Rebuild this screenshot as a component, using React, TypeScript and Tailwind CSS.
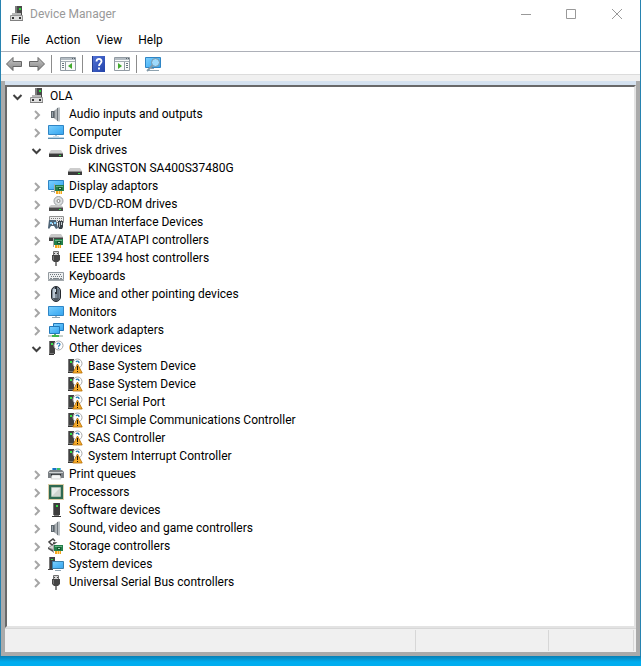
import { useState } from "react";
import type { ReactNode } from "react";

const Svg = ({ children }: { children: ReactNode }) => (
  <svg viewBox="0 0 16 16" className="size-4 shrink-0" aria-hidden="true">
    {children}
  </svg>
);

const Gradients = () => (
  <svg className="absolute size-0" aria-hidden="true">
    <defs>
      <linearGradient id="screen" x1="0" y1="0" x2="1" y2="1">
        <stop offset="0" stopColor="#7fd0fd" />
        <stop offset="0.5" stopColor="#55baf8" />
        <stop offset="1" stopColor="#35a4ee" />
      </linearGradient>
      <linearGradient id="metal" x1="0" y1="0" x2="1" y2="0">
        <stop offset="0" stopColor="#5d656b" />
        <stop offset="0.5" stopColor="#c3c8cb" />
        <stop offset="1" stopColor="#737a7f" />
      </linearGradient>
      <linearGradient id="arrow" x1="0" y1="0" x2="0" y2="1">
        <stop offset="0" stopColor="#c8c8c8" />
        <stop offset="1" stopColor="#858585" />
      </linearGradient>
      <linearGradient id="helpBlue" x1="0" y1="0" x2="1" y2="1">
        <stop offset="0" stopColor="#5273d8" />
        <stop offset="1" stopColor="#2242a8" />
      </linearGradient>
    </defs>
  </svg>
);

const DeviceIcon = () => (
  <Svg>
    <path d="M6 0h7v9H6z" fill="#4a4a4a" />
    <path d="M6 0h2v9H6z" fill="#7d7d7d" />
    <path d="M10 2h2v2h-2z" fill="#2be03a" />
    <path d="M3 7h9v3H3z" fill="#b8b8b8" />
    <path d="M1.500 9.500h12v5h-12z" fill="#dedede" stroke="#949494" />
    <path d="M3 11h2v2H3zM10 11h2v2h-2z" fill="#333" />
    <path d="M1 14h13v1H1z" fill="#808080" />
  </Svg>
);

const SpeakerIcon = () => (
  <Svg>
    <path d="M3 5h3v7H3z" fill="#5d666d" />
    <path d="M4 6h1v5H4z" fill="#9ba5ac" />
    <path d="M6 5l4-3.500v14L6 12z" fill="url(#metal)" />
    <path d="M10 1.500h2v14h-2z" fill="#b9bfc3" />
    <path d="M9.500 2v13" stroke="#6d757b" />
  </Svg>
);

const ComputerIcon = () => (
  <Svg>
    <path d="M.5 1.500h15v9H.5z" fill="url(#screen)" stroke="#2f85c5" />
    <path d="M7 11h2v2H7z" fill="#b5c7d2" />
    <path d="M0 13h16v1H0z" fill="#b8d5e8" />
    <path d="M0 14h16v1H0z" fill="#5f8fb0" />
    <path d="M5 12h6v1H5z" fill="#d5e2ea" />
  </Svg>
);

const MonitorIcon = () => (
  <Svg>
    <path d="M.5 2.500h15v9H.5z" fill="url(#screen)" stroke="#2f85c5" />
    <path d="M7 12h2v1H7z" fill="#a8b8c2" />
    <path d="M4 13h8v1H4z" fill="#8ea2af" />
  </Svg>
);

const DriveIcon = () => (
  <Svg>
    <path d="M3 8h10l2 3H1z" fill="#cdcdcd" />
    <path d="M1 11h14v4H1z" fill="#3b3b3b" />
    <path d="M1 11h14v1H1z" fill="#8c8c8c" />
    <path d="M11 13h2v1h-2z" fill="#35e649" />
  </Svg>
);

const Card = ({ x, y }: { x: number; y: number }) => (
  <g transform={`translate(${x} ${y})`}>
    <path d="M0 0h1v9H0z" fill="#a8a8a8" />
    <path d="M1 1h9v6H1z" fill="#23804b" />
    <path d="M2 2h7v1H2z" fill="#69b184" />
    <path d="M4 3h4v3H4z" fill="#125b31" />
    <path d="M5 4h2v1H5z" fill="#a6d4b4" />
    <path d="M2 7h6v3H2z" fill="#f3a51e" />
    <path d="M4 7h1v3H4zM6 7h1v3H6z" fill="#ffd982" />
  </g>
);

const DisplayIcon = () => (
  <Svg>
    <path d="M.5 2.500h15v9H.5z" fill="url(#screen)" stroke="#2f85c5" />
    <path d="M3 13h4v1H3z" fill="#8ea2af" />
    <Card x={6} y={6} />
  </Svg>
);

const DiscIcon = () => (
  <Svg>
    <circle cx="10.500" cy="5" r="4.500" fill="#dcdfe0" stroke="#9b9fa2" />
    <circle cx="10.500" cy="5" r="1.500" fill="#fff" stroke="#888" />
    <path d="M3 9h10l2 2H1z" fill="#c8c8c8" />
    <path d="M1 11h14v4H1z" fill="#4a4a4a" />
    <path d="M1 11h14v1H1z" fill="#929292" />
    <path d="M11 13h2v1h-2z" fill="#35e649" />
  </Svg>
);

const HidIcon = () => (
  <Svg>
    <path d="M1.500 2.500h14v6h-14z" fill="#eee" stroke="#929292" />
    <path d="M3 4.500h12M3 6.500h12" stroke="#777" strokeDasharray="1 1" />
    <path d="M1 6h7l2 8-2 1-2-3H3l-2 3-1-1z" fill="#4f6476" />
    <path d="M2 8h2v2H2zM6 8h2v2H6z" fill="#8bd0f7" />
    <path d="M4 9h1v2H4z" fill="#dce7ee" />
    <path d="M10 7h5v6l-1 2h-3l-1-2z" fill="#394047" />
    <path d="M11 8h1v5h-1z" fill="#a1a9b0" />
    <path d="M13 8h1v3h-1z" fill="#c5cbd0" />
  </Svg>
);

const IdeIcon = () => (
  <Svg>
    <path d="M3 2h10l2 3H1z" fill="#c9c9c9" />
    <path d="M1 5h14v4H1z" fill="#434343" />
    <path d="M1 5h14v1H1z" fill="#888" />
    <Card x={5} y={6} />
  </Svg>
);

const PlugIcon = () => (
  <Svg>
    <path d="M5.500 1.500h5v4h-5z" fill="#d6d6d6" stroke="#707070" />
    <path d="M6 3h1v1H6zM9 3h1v1H9z" fill="#444" />
    <path d="M4 5h8v5l-2 2H6l-2-2z" fill="#454545" />
    <path d="M5 6h1v4H5z" fill="#777" />
    <path d="M7 12h2v4H7z" fill="#858585" />
  </Svg>
);

const KeyboardIcon = () => (
  <Svg>
    <path d="M.5 4.500h15v7H.5z" fill="#eef0f1" stroke="#92999e" />
    <path d="M2 6.500h12" stroke="#6d757b" strokeDasharray="1 1" />
    <path d="M3 8.500h11" stroke="#6d757b" strokeDasharray="1 1" />
    <path d="M2 10.500h2M12 10.500h2M5 10.500h6" stroke="#7f878d" />
    <path d="M0 12h16v1H0z" fill="#a4aaae" />
  </Svg>
);

const MouseIcon = () => (
  <Svg>
    <rect x="3.500" y=".5" width="9" height="15" rx="4.500" fill="#7d8b99" stroke="#24282d" />
    <path d="M5 3h2v9H5z" fill="#bdc8d2" />
    <path d="M9 3h2v9H9z" fill="#66727e" />
    <path d="M7 1h2v7H7z" fill="#2a3037" />
    <path d="M7 3h1v3H7z" fill="#c8dceb" />
    <path d="M5 12h6l-1 3H6z" fill="#4e5760" />
  </Svg>
);

const NetworkIcon = () => (
  <Svg>
    <path d="M5.500 1.500h10v7h-10z" fill="url(#screen)" stroke="#2379ba" />
    <path d="M1.500 4.500h10v7h-10z" fill="url(#screen)" stroke="#2379ba" />
    <path d="M6 12h2v1H6z" fill="#61ad69" />
    <path d="M0 13h15v2H0z" fill="#c6cfc9" />
    <path d="M4 13h7v2H4z" fill="#40b74d" />
  </Svg>
);

const UnknownTower = () => (
  <>
    <path d="M1 1h6v13H1z" fill="#414141" />
    <path d="M1 1h1v13H1z" fill="#767676" />
    <path d="M3 3h2v2H3z" fill="#35e649" />
    <path d="M2 13h4v1H2z" fill="#777" />
    <path d="M1 14h5v1H1z" fill="#333" />
    <circle cx="10.500" cy="5.500" r="4.500" fill="#fff" stroke="#aaa" />
  </>
);

const OtherIcon = () => (
  <Svg>
    <UnknownTower />
    <path d="M9 4.500c0-2 3-2 3 0 0 1-1.500 1-1.500 2.200M10.500 7.700v1" fill="none" stroke="#2579b7" strokeWidth="1.200" />
  </Svg>
);

const WarningIcon = () => (
  <Svg>
    <UnknownTower />
    <path d="M9 4c1-1.500 3-1 3 1" fill="none" stroke="#2579b7" strokeWidth="1.300" />
    <path d="M10.500 6L15.200 15H5.800z" fill="#f6ab2b" stroke="#b66c00" strokeWidth=".8" strokeLinejoin="round" />
    <path d="M10 8h1v4h-1zM10 13h1v1h-1z" fill="#211500" />
  </Svg>
);

const PrinterIcon = () => (
  <Svg>
    <path d="M4 2h9v3H4z" fill="#61b4e9" />
    <path d="M5 2h3v3H5z" fill="#1a70c2" />
    <path d="M9 2h3v3H9z" fill="#39bf65" />
    <path d="M2 4h12l2 2v6H0V6z" fill="#7b8084" />
    <path d="M1 6h14v1H1z" fill="#cdd0d2" />
    <path d="M3 8h10v2H3z" fill="#252a2e" />
    <path d="M4 9h8l1 4H3z" fill="#f6f7f8" stroke="#aaa" strokeWidth=".5" />
  </Svg>
);

const CpuIcon = () => (
  <Svg>
    <rect x=".5" y=".5" width="15" height="15" fill="none" stroke="#b79a4f" strokeDasharray="1 1" />
    <path d="M1 1h14v14H1z" fill="#2f6951" />
    <path d="M4 4h8v8H4z" fill="#d0d4d0" />
    <path d="M4 4h8l-8 8z" fill="#e9ebe9" />
    <path d="M3.500 3.500h9v9h-9z" fill="none" stroke="#a9bdae" />
  </Svg>
);

const TowerIcon = () => (
  <Svg>
    <path d="M5 1h7v12H5z" fill="#3d3d3d" />
    <path d="M5 1h1v12H5z" fill="#777" />
    <path d="M8 3h2v2H8z" fill="#36df45" />
    <path d="M6 13h5v1H6z" fill="#777" />
    <path d="M4 14h9v1H4z" fill="#333" />
  </Svg>
);

const StorageIcon = () => (
  <Svg>
    <path d="M7 3L5 1 1 4l3 3 3-2H5" fill="none" stroke="#444" strokeWidth="1.500" />
    <path d="M0 10l4-3 3 2v3z" fill="#d5d5d5" stroke="#777" strokeWidth=".8" />
    <path d="M0 11l5 3V12L0 9.500z" fill="#555" />
    <Card x={5} y={6} />
  </Svg>
);

const SystemIcon = () => (
  <Svg>
    <path d="M1 1h6v12H1z" fill="#3d4145" />
    <path d="M1 1h1v12H1z" fill="#777" />
    <path d="M3 3h2v1H3z" fill="#36df45" />
    <path d="M0 13h5v1H0z" fill="#444" />
    <path d="M4.500 5.500h11v7h-11z" fill="url(#screen)" stroke="#397fac" />
    <path d="M7 14h6v1H7z" fill="#8ea2af" />
  </Svg>
);

type Device = {
  name: string;
  icon: () => ReactNode;
  children?: string[];
};

const devices: Device[] = [
  { name: "Audio inputs and outputs", icon: SpeakerIcon },
  { name: "Computer", icon: ComputerIcon },
  { name: "Disk drives", icon: DriveIcon, children: ["KINGSTON SA400S37480G"] },
  { name: "Display adaptors", icon: DisplayIcon },
  { name: "DVD/CD-ROM drives", icon: DiscIcon },
  { name: "Human Interface Devices", icon: HidIcon },
  { name: "IDE ATA/ATAPI controllers", icon: IdeIcon },
  { name: "IEEE 1394 host controllers", icon: PlugIcon },
  { name: "Keyboards", icon: KeyboardIcon },
  { name: "Mice and other pointing devices", icon: MouseIcon },
  { name: "Monitors", icon: MonitorIcon },
  { name: "Network adapters", icon: NetworkIcon },
  {
    name: "Other devices",
    icon: OtherIcon,
    children: [
      "Base System Device",
      "Base System Device",
      "PCI Serial Port",
      "PCI Simple Communications Controller",
      "SAS Controller",
      "System Interrupt Controller",
    ],
  },
  { name: "Print queues", icon: PrinterIcon },
  { name: "Processors", icon: CpuIcon },
  { name: "Software devices", icon: TowerIcon },
  { name: "Sound, video and game controllers", icon: SpeakerIcon },
  { name: "Storage controllers", icon: StorageIcon },
  { name: "System devices", icon: SystemIcon },
  { name: "Universal Serial Bus controllers", icon: PlugIcon },
];

const Toggle = ({ open, label, onClick }: { open: boolean; label: string; onClick: () => void }) => (
  <button type="button" aria-label={label} aria-expanded={open} onClick={onClick} className="size-4 shrink-0">
    <Svg>
      {open ? (
        <path d="M4.500 7l4 4 4-4" fill="none" stroke="#404040" strokeWidth="2" />
      ) : (
        <path d="M7 5l4 4-4 4" fill="none" stroke="#a6a6a6" strokeWidth="2" />
      )}
    </Svg>
  </button>
);

const Label = ({ children }: { children: ReactNode }) => (
  <span className="ml-[5px] whitespace-nowrap">{children}</span>
);

const DeviceNode = ({ device }: { device: Device }) => {
  const [open, setOpen] = useState(Boolean(device.children));
  const Icon = device.icon;
  const ChildIcon = device.name === "Disk drives" ? DriveIcon : WarningIcon;
  return (
    <li>
      <div className="flex h-[18px] items-center pl-5">
        <Toggle open={open} label={`Toggle ${device.name}`} onClick={() => setOpen(!open)} />
        <span className="ml-1"><Icon /></span>
        <Label>{device.name}</Label>
      </div>
      {open && device.children && (
        <ul>
          {device.children.map((child, i) => (
            <li key={i} className="flex h-[18px] items-center pl-[59px]">
              <ChildIcon />
              <Label>{child}</Label>
            </li>
          ))}
        </ul>
      )}
    </li>
  );
};

const TitleBar = () => (
  <header className="flex h-[30px] items-center pb-0.5 pl-2 text-[#999]">
    <DeviceIcon />
    <h1 className="ml-[5px] flex-1">Device Manager</h1>
    <button type="button" aria-label="Minimise" className="flex h-full w-[45px] items-center justify-center">
      <svg viewBox="0 0 10 10" className="size-2.5"><path d="M0 5.500h10" stroke="#999" /></svg>
    </button>
    <button type="button" aria-label="Maximise" className="flex h-full w-[45px] items-center justify-center">
      <svg viewBox="0 0 10 10" className="size-2.5"><path d="M.5.5h9v9h-9z" fill="none" stroke="#999" /></svg>
    </button>
    <button type="button" aria-label="Close" className="flex h-full w-[47px] items-center justify-center">
      <svg viewBox="0 0 10 10" className="size-2.5"><path d="M0 0l10 10M10 0L0 10" stroke="#999" /></svg>
    </button>
  </header>
);

const MenuBar = () => (
  <nav className="flex h-[21px] items-center gap-4 pb-0.5 pl-2.5">
    {["File", "Action", "View", "Help"].map((item) => (
      <button key={item} type="button">{item}</button>
    ))}
  </nav>
);

const Separator = () => <div className="mx-1.5 h-[18px] w-px bg-[#8c8c8c]" />;

const Pane = ({ flip }: { flip?: boolean }) => (
  <Svg>
    <path d="M.5 1.500h15v13H.5z" fill="#fafafa" stroke="#929ba3" />
    <path d="M1 2h14v2H1z" fill="#b4bcc3" />
    <path d="M12 2h1v1h-1zM14 2h1v1h-1z" fill="#59636b" />
    <path d="M1 5.500h14" stroke="#a4adb4" />
    {flip ? (
      <>
        <path d="M10.500 6v8" stroke="#929ba3" />
        <path d="M12 7.500h2M12 9.500h2M12 11.500h2" stroke="#69747d" />
        <path d="M4 7v6l4-3z" fill="#42aa2d" />
      </>
    ) : (
      <>
        <path d="M5.500 6v8" stroke="#929ba3" />
        <path d="M2 7.500h2M2 9.500h2M2 11.500h2" stroke="#69747d" />
        <path d="M12 7v6l-4-3z" fill="#42aa2d" />
      </>
    )}
  </Svg>
);

const Toolbar = () => (
  <div role="toolbar" className="flex h-[23px] items-center border-b border-[#dcdcdc] pt-0.5 pl-[5px]">
    <button type="button" aria-label="Back" className="mr-[7px]">
      <Svg><path d="M.5 8L7 1.500v4h8.500v5H7v4z" fill="url(#arrow)" stroke="#666" /></Svg>
    </button>
    <button type="button" aria-label="Forward">
      <Svg><path d="M15.500 8L9 1.500v4H.5v5H9v4z" fill="url(#arrow)" stroke="#666" /></Svg>
    </button>
    <Separator />
    <button type="button" aria-label="Show or hide console tree" className="ml-0.5"><Pane /></button>
    <Separator />
    <button type="button" aria-label="Help" className="ml-0.5 mr-[7px]">
      <Svg>
        <path d="M1 0h13v16H1z" fill="url(#helpBlue)" />
        <path d="M1 0h1v16H1z" fill="#243d8e" />
        <path d="M5.500 5.500c0-3.500 5-3.500 5 0 0 2-2.500 2-2.500 4.500M8 11.500v2" fill="none" stroke="#fff" strokeWidth="1.800" />
      </Svg>
    </button>
    <button type="button" aria-label="Show or hide action pane"><Pane flip /></button>
    <Separator />
    <button type="button" aria-label="Scan for hardware changes" className="ml-0.5">
      <Svg>
        <path d="M.5 1.500h15v10H.5z" fill="url(#screen)" stroke="#2f85c5" />
        <path d="M6 12h3v1H6zM2 14h12v1H2z" fill="#8ea2af" />
        <circle cx="10.500" cy="6.500" r="4" fill="#9fdafc" stroke="#7893a6" />
        <path d="M7.500 9.500L2 15" stroke="#8299a8" strokeWidth="1.800" />
      </Svg>
    </button>
  </div>
);

const DeviceTree = () => {
  const [open, setOpen] = useState(true);
  return (
    <main className="flex-1 border-2 border-t-[#696969] border-r-[#e3e3e3] border-b-[#e3e3e3] border-l-[#696969] bg-white pl-px">
      <div className="flex h-[18px] items-center pl-px">
        <Toggle open={open} label="Toggle OLA" onClick={() => setOpen(!open)} />
        <span className="ml-1"><DeviceIcon /></span>
        <Label>OLA</Label>
      </div>
      {open && (
        <ul>
          {devices.map((device) => <DeviceNode key={device.name} device={device} />)}
        </ul>
      )}
    </main>
  );
};

const StatusBar = () => (
  <footer className="flex h-6 border-t border-[#d7d7d7] bg-[#f0f0f0] py-px pr-0.5">
    <div className="flex-1 border-r border-[#d7d7d7]" />
    <div className="w-[133px] border-r border-[#d7d7d7]" />
    <div className="w-[85px] border-r border-[#d7d7d7]" />
  </footer>
);

export default function App() {
  return (
    <div className="flex min-h-screen flex-col bg-[#00adef] font-[Roboto,'Noto_Sans',sans-serif] text-xs text-black">
      <Gradients />
      <div className="flex flex-1 flex-col border-x border-[#2783b0] bg-white">
        <TitleBar />
        <MenuBar />
        <div className="h-px bg-[#adb0b8]" />
        <Toolbar />
        <div className="h-1.5 bg-[#f0f0f0]" />
        <div className="flex flex-1 flex-col border-x-4 border-b-4 border-[#aaa] bg-white">
          <div className="h-1 bg-[#d5e2f0]" />
          <DeviceTree />
          <StatusBar />
        </div>
      </div>
      <div className="h-2.5 bg-linear-to-b from-[#087fb4] to-[#00adef] to-60%" />
    </div>
  );
}
